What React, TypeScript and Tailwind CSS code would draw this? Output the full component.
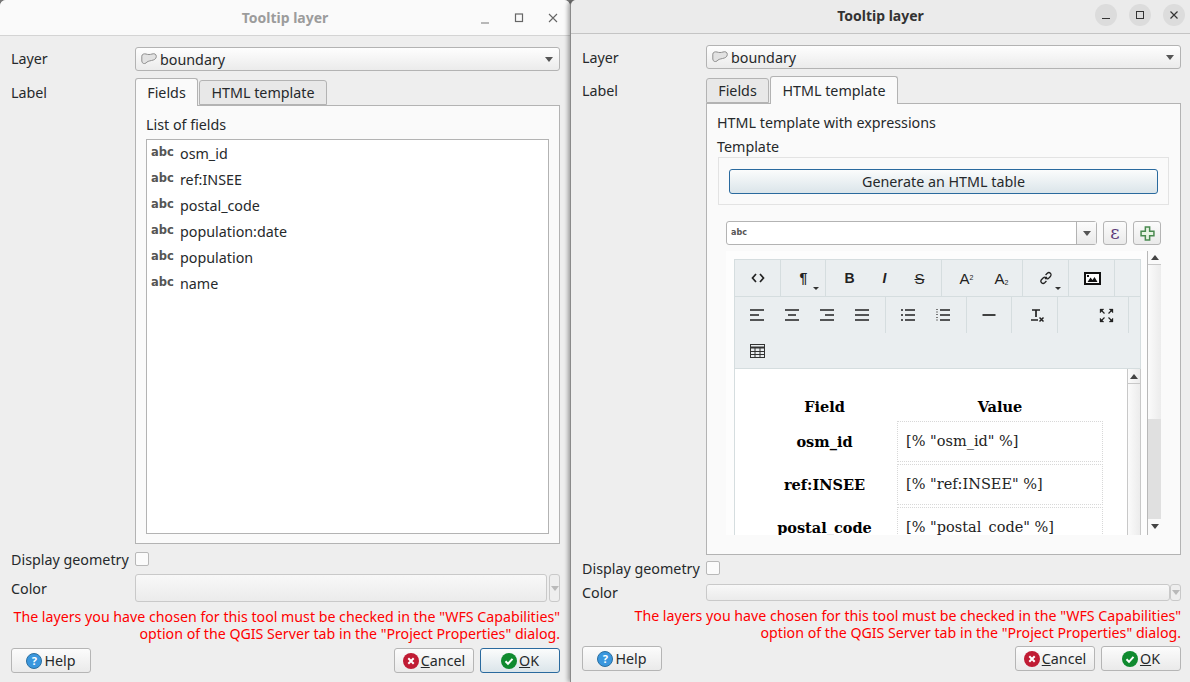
import React from "react";

const labelClass = "text-[14.3px] leading-[17px] text-[#26292b]";

function Arrow({ muted = false }: { muted?: boolean }) {
  return (
    <svg width="8" height="5" viewBox="0 0 8 5" className="shrink-0">
      <path d="M0 0H8L4 5Z" fill={muted ? "#b9b9b9" : "#555"} />
    </svg>
  );
}

function LayerIcon() {
  return (
    <svg width="16" height="12" viewBox="0 0 16 12" className="shrink-0">
      <path
        d="M0.8 3.2C0.8 1.2 3 0.5 5 1C7 1.7 9 1.7 11 1C13.5 0.3 15.3 1 15.3 3.5C15.3 6 13 7 10.5 7.5C8 8 6 8.5 5 10C3.5 11.2 0.8 10.5 0.8 8Z"
        fill="#e2e2e2"
        stroke="#8f8f8f"
        strokeWidth="1"
      />
    </svg>
  );
}

function HelpIcon() {
  return (
    <span className="w-4 h-4 rounded-full bg-[#3a97de] border border-[#2c6f9f] text-white text-[11px] leading-[14px] font-bold text-center shrink-0">
      ?
    </span>
  );
}

function CancelIcon() {
  return (
    <svg width="16" height="16" viewBox="0 0 16 16" className="shrink-0">
      <circle cx="8" cy="8" r="8" fill="#c01c34" />
      <path d="M5.3 5.3L10.7 10.7M10.7 5.3L5.3 10.7" stroke="#fff" strokeWidth="2" />
    </svg>
  );
}

function OkIcon() {
  return (
    <svg width="16" height="16" viewBox="0 0 16 16" className="shrink-0">
      <circle cx="8" cy="8" r="8" fill="#0f8a2f" />
      <path d="M4.5 8.3L7 10.8L11.5 5.8" stroke="#fff" strokeWidth="2" fill="none" />
    </svg>
  );
}

function DialogButton({
  children,
  focused = false,
  className = "",
}: {
  children: React.ReactNode;
  focused?: boolean;
  className?: string;
}) {
  return (
    <button
      className={`w-[80px] h-[25px] rounded-[3px] border flex items-center justify-center gap-[2px] text-[14.3px] text-[#26292b] ${
        focused
          ? "border-[#2a6a9e] bg-gradient-to-b from-[#fbfcfc] to-[#dbe5ea]"
          : "border-[#b5b5b5] bg-gradient-to-b from-[#fcfcfc] to-[#eaeaea]"
      } ${className}`}
    >
      {children}
    </button>
  );
}

function Checkbox() {
  return <span className="block w-[14px] h-[14px] rounded-[2px] border border-[#b8b8b8] bg-[#fbfbfb]" />;
}

function LayerCombo() {
  return (
    <div className="h-[24px] rounded-[3px] border border-[#b3b3b3] bg-gradient-to-b from-[#fefefe] to-[#ebebeb] flex items-center pl-[5px] pr-[6px] gap-[3px]">
      <LayerIcon />
      <span className={`${labelClass} flex-1`}>boundary</span>
      <Arrow />
    </div>
  );
}

function Warning() {
  return (
    <div className="mt-[6px] text-right text-[14.2px] leading-[17px] text-[#ff0000] h-[34px] whitespace-nowrap">
      <p>The layers you have chosen for this tool must be checked in the "WFS Capabilities"</p>
      <p>option of the QGIS Server tab in the "Project Properties" dialog.</p>
    </div>
  );
}

function Footer({ focusOk = false, className = "" }: { focusOk?: boolean; className?: string }) {
  return (
    <div className={`flex items-center ${className}`}>
      <DialogButton>
        <HelpIcon />
        <span>Help</span>
      </DialogButton>
      <DialogButton className="ml-auto">
        <CancelIcon />
        <span>
          <span className="underline">C</span>ancel
        </span>
      </DialogButton>
      <DialogButton focused={focusOk} className="ml-[6px]">
        <OkIcon />
        <span>
          <span className="underline">O</span>K
        </span>
      </DialogButton>
    </div>
  );
}

function Tab({
  active,
  width,
  children,
}: {
  active: boolean;
  width: string;
  children: React.ReactNode;
}) {
  return (
    <div
      className={`${width} flex items-center justify-center border border-[#b3b3b3] rounded-t-[3px] text-[14.3px] text-[#26292b] ${
        active ? "h-[28px] border-b-0 bg-[#fafafa] relative z-10 -mb-px" : "h-[25px] mt-[2px] bg-[#e8e8e8]"
      }`}
    >
      {children}
    </div>
  );
}

const fields = ["osm_id", "ref:INSEE", "postal_code", "population:date", "population", "name"];

function FieldList() {
  return (
    <div className="flex-1 mt-[6px] mx-[10px] mb-[9px] border border-[#b3b3b3] bg-white">
      {fields.map((f) => (
        <div key={f} className="h-[26px] flex items-center pl-[4px]">
          <span className="w-[29px] font-['DejaVu_Sans'] font-bold text-[11.5px] text-[#555]">abc</span>
          <span className={labelClass}>{f}</span>
        </div>
      ))}
    </div>
  );
}

function ToolbarGroup({
  width,
  pad,
  last = false,
  children,
}: {
  width: string;
  pad: string;
  last?: boolean;
  children: React.ReactNode;
}) {
  return (
    <div className={`${width} ${pad} h-[36px] flex items-center ${last ? "" : "border-r border-[#d5dddf]"}`}>
      {children}
    </div>
  );
}

function ToolIcon({ children, caret = false }: { children: React.ReactNode; caret?: boolean }) {
  return (
    <div className="relative w-[35px] h-[36px] flex items-center justify-center text-[#222]">
      {children}
      {caret && (
        <svg width="6" height="3" viewBox="0 0 6 3" className="absolute right-[2px] bottom-[6px]">
          <path d="M0 0H6L3 3Z" fill="#333" />
        </svg>
      )}
    </div>
  );
}

function Glyph({ d }: { d: string }) {
  return (
    <svg width="16" height="16" viewBox="0 0 16 16">
      <path d={d} fill="none" stroke="#222" strokeWidth="1.7" />
    </svg>
  );
}

const toolText = "font-['Liberation_Sans'] text-[14px] leading-none text-[#222]";

function Toolbar() {
  return (
    <div className="bg-[#eaeef0] border border-[#d5dddf] h-[110px] shrink-0">
      <div className="flex h-[37px] border-b border-[#d5dddf]">
        <ToolbarGroup width="w-[46px]" pad="pl-[5px]">
          <ToolIcon>
            <Glyph d="M6 4L2.5 8L6 12M10 4L13.5 8L10 12" />
          </ToolIcon>
        </ToolbarGroup>
        <ToolbarGroup width="w-[45px]" pad="pl-[5px]">
          <ToolIcon caret>
            <span className={`${toolText} font-bold`}>¶</span>
          </ToolIcon>
        </ToolbarGroup>
        <ToolbarGroup width="w-[116px]" pad="pl-[6px]">
          <ToolIcon>
            <span className={`${toolText} font-bold`}>B</span>
          </ToolIcon>
          <ToolIcon>
            <span className={`${toolText} italic font-bold`}>I</span>
          </ToolIcon>
          <ToolIcon>
            <span className={`${toolText} text-[15px] line-through`}>S</span>
          </ToolIcon>
        </ToolbarGroup>
        <ToolbarGroup width="w-[81px]" pad="pl-[7px]">
          <ToolIcon>
            <span className={`${toolText} text-[15px]`}>
              A<sup className="text-[7px]">2</sup>
            </span>
          </ToolIcon>
          <ToolIcon>
            <span className={`${toolText} text-[15px]`}>
              A<sub className="text-[7px]">2</sub>
            </span>
          </ToolIcon>
        </ToolbarGroup>
        <ToolbarGroup width="w-[46px]" pad="pl-[5px]">
          <ToolIcon caret>
            <svg width="14" height="14" viewBox="0 0 16 16" fill="none" stroke="#222" strokeWidth="1.5">
              <path d="M6.8 9.2L9.2 6.8M7.5 4.5L9.5 2.5C10.5 1.6 12 1.6 13 2.6C14 3.6 14 5.2 13 6.2L11 8.2C10 9.1 8.8 9.1 8 8.4M8.5 11.5L6.5 13.5C5.5 14.4 4 14.4 3 13.4C2 12.4 2 10.8 3 9.8L5 7.8C6 6.9 7.2 6.9 8 7.6" />
            </svg>
          </ToolIcon>
        </ToolbarGroup>
        <ToolbarGroup width="w-[46px]" pad="pl-[6px]">
          <ToolIcon>
            <svg width="17" height="13" viewBox="0 0 17 13">
              <rect x="1" y="1" width="15" height="11" fill="#fff" stroke="#111" strokeWidth="2" />
              <path d="M3.5 10L6.5 5.5L8.5 8L10.5 5L13.5 10Z" fill="#111" />
              <rect x="3" y="3" width="2" height="2" fill="#111" />
            </svg>
          </ToolIcon>
        </ToolbarGroup>
      </div>
      <div className="flex h-[36px]">
        <ToolbarGroup width="w-[151px]" pad="pl-[4px]">
          {["M1 3H15M1 8H10M1 13H15", "M1 3H15M4 8H12M1 13H15", "M1 3H15M6 8H15M1 13H15", "M1 3H15M1 8H15M1 13H15"].map((d) => (
            <ToolIcon key={d}>
              <Glyph d={d} />
            </ToolIcon>
          ))}
        </ToolbarGroup>
        <ToolbarGroup width="w-[81px]" pad="pl-[4px]">
          <ToolIcon>
            <Glyph d="M5 3H15M5 8H15M5 13H15M1 3H3M1 8H3M1 13H3" />
          </ToolIcon>
          <ToolIcon>
            <svg width="16" height="16" viewBox="0 0 16 16" fill="none">
              <path d="M5 3H15M5 8H15M5 13H15" stroke="#222" strokeWidth="1.7" />
              <path d="M1 2.5H3M1 5H3M1 7.5H3M1 10.5H3M1 13H3" stroke="#777" strokeWidth="1" />
            </svg>
          </ToolIcon>
        </ToolbarGroup>
        <ToolbarGroup width="w-[45px]" pad="pl-[4px]">
          <ToolIcon>
            <Glyph d="M1.5 8H14.5" />
          </ToolIcon>
        </ToolbarGroup>
        <ToolbarGroup width="w-[46px]" pad="pl-[7px]">
          <ToolIcon>
            <svg width="16" height="16" viewBox="0 0 16 16" fill="none" stroke="#222">
              <path d="M3 3H11M7 3V10" strokeWidth="1.7" />
              <path d="M2 13H9" strokeWidth="1.5" />
              <path d="M10.5 10.5L14.5 14.5M14.5 10.5L10.5 14.5" strokeWidth="1.5" />
            </svg>
          </ToolIcon>
        </ToolbarGroup>
        <ToolbarGroup width="w-[71px]" pad="pl-[31px]">
          <ToolIcon>
            <svg width="15" height="15" viewBox="0 0 15 15" fill="#222" stroke="#222">
              <path d="M1 1H5L1 5ZM14 1H10L14 5ZM1 14H5L1 10ZM14 14H10L14 10Z" strokeWidth="0.3" />
              <path d="M2 2L5.5 5.5M13 2L9.5 5.5M2 13L5.5 9.5M13 13L9.5 9.5" strokeWidth="1.2" />
            </svg>
          </ToolIcon>
        </ToolbarGroup>
      </div>
      <div className="flex h-[36px] pl-[5px]">
        <ToolIcon>
          <svg width="15" height="14" viewBox="0 0 15 14" fill="none" stroke="#333">
            <rect x="0.5" y="0.5" width="14" height="13" />
            <path d="M0.5 3.5H14.5" strokeWidth="2" />
            <path d="M0.5 7.5H14.5M0.5 10.5H14.5M5 3V14M10 3V14" />
          </svg>
        </ToolIcon>
      </div>
    </div>
  );
}

function ScrollArrow({ up }: { up: boolean }) {
  return (
    <svg width="8" height="5" viewBox="0 0 8 5">
      <path d={up ? "M0 5H8L4 0Z" : "M0 0H8L4 5Z"} fill="#444" />
    </svg>
  );
}

const tableRows = [
  ["osm_id", '[% "osm_id" %]'],
  ["ref:INSEE", '[% "ref:INSEE" %]'],
  ["postal_code", '[% "postal_code" %]'],
];

function EditorBody() {
  return (
    <div className="flex-1 flex min-h-0 border-l border-[#d5dddf]">
      <div className="flex-1 bg-white overflow-hidden pt-[19px] pl-[14px] font-['DejaVu_Serif'] text-[14.5px] text-[#222]">
        <div className="grid grid-cols-[148px_206px] gap-y-[2px]">
          <div className="h-[31px] pt-[6px] pl-[3px] flex items-center justify-center font-bold text-black">Field</div>
          <div className="h-[31px] pt-[6px] flex items-center justify-center font-bold text-black">Value</div>
          {tableRows.map(([name, value]) => (
            <React.Fragment key={name}>
              <div className="h-[41px] pl-[3px] flex items-center justify-center font-bold text-black">{name}</div>
              <div className="h-[41px] flex items-center pl-[8px] border border-dotted border-[#d8d8d8]">{value}</div>
            </React.Fragment>
          ))}
        </div>
      </div>
      <div className="w-[14px] border-x border-[#c8c8c8] bg-gradient-to-r from-[#fbfbfb] to-[#ececec] shrink-0">
        <div className="h-[15px] border-b border-[#c8c8c8] flex items-center justify-center">
          <ScrollArrow up />
        </div>
      </div>
    </div>
  );
}

function Editor() {
  return (
    <div className="mt-[6px] ml-[9px] mr-[7px] h-[284px] flex">
      <div className="w-[421px] bg-[#fdfdfd] pt-[8px] pl-[8px] pr-[6px] flex flex-col">
        <Toolbar />
        <EditorBody />
      </div>
      <div className="w-[14px] border-l border-[#b8b8b8] flex flex-col shrink-0">
        <div className="h-[14px] border-b border-[#c8c8c8] flex items-center justify-center">
          <ScrollArrow up />
        </div>
        <div className="h-[154px] bg-gradient-to-r from-[#fbfbfb] to-[#ececec]" />
        <div className="flex-1 bg-[#e0e0e0]" />
        <div className="h-[16px] pb-[2px] flex items-center justify-center">
          <ScrollArrow up={false} />
        </div>
      </div>
    </div>
  );
}

function TemplatePane() {
  return (
    <div className="h-[452px] border border-[#b3b3b3] bg-[#fafafa] px-[10px] pt-[10px]">
      <div className={labelClass}>HTML template with expressions</div>
      <div className={`${labelClass} mt-[7px]`}>Template</div>
      <div className="mt-[2px] mx-[1px] h-[48px] border border-[#e3e3e3] flex items-center justify-center">
        <DialogButton focused className="!w-[429px] pt-[1px]">
          Generate an HTML table
        </DialogButton>
      </div>
      <div className="mt-[16px] ml-[9px] flex items-center">
        <div className="w-[371px] h-[24px] rounded-[3px] border border-[#b3b3b3] bg-white flex items-center">
          <span className="flex-1 pl-[4px] font-['DejaVu_Sans'] font-bold text-[8px] text-[#555]">abc</span>
          <div className="w-[20px] h-full border-l border-[#b3b3b3] bg-gradient-to-b from-[#fcfcfc] to-[#eaeaea] flex items-center justify-center">
            <Arrow />
          </div>
        </div>
        <div className="ml-[6px] w-[24px] h-[24px] rounded-[3px] border border-[#b5b5b5] bg-gradient-to-b from-[#fcfcfc] to-[#eaeaea] flex items-center justify-center font-['DejaVu_Serif'] text-[18px] leading-none text-[#5c3a78]">
          ε
        </div>
        <div className="ml-[6px] w-[28px] h-[24px] rounded-[3px] border border-[#b5b5b5] bg-gradient-to-b from-[#fcfcfc] to-[#eaeaea] flex items-center justify-center">
          <svg width="15" height="15" viewBox="0 0 14 14">
            <path d="M5 1H9V5H13V9H9V13H5V9H1V5H5Z" fill="#e8f3e4" stroke="#4a8a50" strokeWidth="1.4" />
          </svg>
        </div>
      </div>
      <Editor />
    </div>
  );
}

export default function App() {
  return (
    <div className="flex w-[1190px] h-[682px] overflow-hidden bg-[#777] font-['Noto_Sans',sans-serif]">
      {/* left dialog, unfocused */}
      <div className="w-[570px] h-full flex flex-col bg-[#eeeeee] rounded-t-[6px] overflow-hidden">
        <div className="h-[36px] shrink-0 border-b border-[#d4d4d4] bg-[#fafafa] relative flex items-center justify-center pb-[1px]">
          <span className="text-[14px] font-bold text-[#9c9c9c]">Tooltip layer</span>
          <div className="absolute right-[9px] top-0 h-full flex items-center gap-[18px] text-[#666]">
            <svg width="16" height="16" viewBox="0 0 16 16" stroke="#777" fill="none" strokeWidth="1">
              <path d="M4 13H12" />
            </svg>
            <svg width="16" height="16" viewBox="0 0 16 16" stroke="#666" fill="none" strokeWidth="1.2">
              <rect x="4.5" y="4" width="7" height="7.5" />
            </svg>
            <svg width="16" height="16" viewBox="0 0 16 16" stroke="#666" fill="none" strokeWidth="1.1">
              <path d="M4 4L12 12M12 4L4 12" />
            </svg>
          </div>
        </div>
        <div className="flex-1 flex flex-col pl-[11px] pr-[10px] min-h-0">
          <div className="flex items-center mt-[11px]">
            <span className={`${labelClass} w-[124px] pb-[2px]`}>Layer</span>
            <div className="flex-1">
              <LayerCombo />
            </div>
          </div>
          <div className="flex mt-[7px] h-[466px]">
            <span className={`${labelClass} w-[124px] mt-[6px]`}>Label</span>
            <div className="flex-1 flex flex-col">
              <div className="flex gap-px h-[27px]">
                <Tab active width="w-[63px]">
                  Fields
                </Tab>
                <Tab active={false} width="w-[128px]">
                  HTML template
                </Tab>
              </div>
              <div className="flex-1 flex flex-col border border-[#b3b3b3] bg-[#fafafa] pt-[10px] min-h-0">
                <div className={`${labelClass} pl-[10px]`}>List of fields</div>
                <FieldList />
              </div>
            </div>
          </div>
          <div className="flex items-center mt-[8px] h-[14px]">
            <span className={`${labelClass} w-[124px] whitespace-nowrap`}>Display geometry</span>
            <Checkbox />
          </div>
          <div className="flex items-center mt-[8px] h-[28px]">
            <span className={`${labelClass} w-[124px]`}>Color</span>
            <div className="w-[412px] h-full rounded-[3px] border border-[#c9c9c9] bg-gradient-to-b from-[#f8f8f8] to-[#ebebeb]" />
            <div className="ml-[2px] flex-1 h-full rounded-[3px] border border-[#c9c9c9] flex items-center justify-center">
              <Arrow muted />
            </div>
          </div>
          <Warning />
          <Footer focusOk className="mt-[6px]" />
        </div>
      </div>

      {/* right dialog, focused */}
      <div className="w-[620px] h-full flex flex-col bg-[#eeeeee] border-l border-[#8a8a8a] shadow-[-2px_0_4px_rgba(0,0,0,0.35)] relative rounded-tl-[6px] overflow-hidden">
        <div className="h-[34px] shrink-0 border-b border-[#c4c4c4] bg-[#ebebeb] relative flex items-center justify-center pb-[3px]">
          <span className="text-[14px] font-bold text-[#333]">Tooltip layer</span>
          <div className="absolute right-[5px] top-0 h-[30px] flex items-center gap-[12px]">
            <span className="w-[22px] h-[22px] rounded-full bg-[#dcdcdc] flex items-center justify-center">
              <svg width="16" height="16" viewBox="0 0 16 16" stroke="#333" fill="none">
                <path d="M4 11.5H12" />
              </svg>
            </span>
            <span className="w-[22px] h-[22px] rounded-full bg-[#dcdcdc] flex items-center justify-center">
              <svg width="16" height="16" viewBox="0 0 16 16" stroke="#333" fill="none">
                <rect x="4.5" y="4.5" width="7" height="7" />
              </svg>
            </span>
            <span className="w-[22px] h-[22px] rounded-full bg-[#dcdcdc] flex items-center justify-center">
              <svg width="16" height="16" viewBox="0 0 16 16" stroke="#333" fill="none" strokeWidth="1.2">
                <path d="M4.5 4.5L11.5 11.5M11.5 4.5L4.5 11.5" />
              </svg>
            </span>
          </div>
        </div>
        <div className="flex-1 flex flex-col pl-[11px] pr-[9px] min-h-0">
          <div className="flex items-center mt-[11px]">
            <span className={`${labelClass} w-[124px]`}>Layer</span>
            <div className="flex-1">
              <LayerCombo />
            </div>
          </div>
          <div className="flex mt-[7px]">
            <span className={`${labelClass} w-[124px] mt-[6px]`}>Label</span>
            <div className="flex-1 flex flex-col">
              <div className="flex gap-px h-[27px] items-start">
                <Tab active={false} width="w-[63px]">
                  Fields
                </Tab>
                <Tab active width="w-[128px]">
                  HTML template
                </Tab>
              </div>
              <TemplatePane />
            </div>
          </div>
          <div className="flex items-center mt-[6px] h-[14px]">
            <span className={`${labelClass} w-[124px] whitespace-nowrap`}>Display geometry</span>
            <Checkbox />
          </div>
          <div className="flex items-center mt-[9px] h-[17px]">
            <span className={`${labelClass} w-[124px]`}>Color</span>
            <div className="w-[464px] h-full rounded-[3px] border border-[#c9c9c9] bg-gradient-to-b from-[#f8f8f8] to-[#ebebeb]" />
            <div className="flex-1 h-full rounded-[3px] border border-[#c9c9c9] flex items-center justify-center">
              <Arrow muted />
            </div>
          </div>
          <Warning />
          <Footer className="mt-[5px]" />
        </div>
      </div>
    </div>
  );
}
